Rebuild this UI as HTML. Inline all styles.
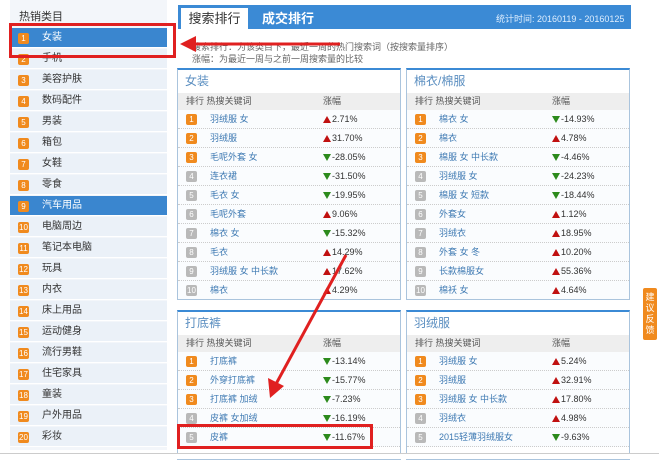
<!DOCTYPE html>
<html><head><meta charset="utf-8"><style>
*{margin:0;padding:0;box-sizing:border-box}
body{width:659px;height:459px;overflow:hidden;background:#fff;font-family:"Liberation Sans","Noto Sans CJK SC",sans-serif;font-size:10px;color:#333;position:relative}
.abs{position:absolute}
.side{left:10px;top:0;width:157px;height:450px;background:#f3f6fa}
.side .t{position:absolute;left:9px;top:8px;font-size:11px;color:#333}
.row{position:absolute;left:0;width:157px;height:20px;background:#ebf1f8;border-bottom:1px solid #fff;font-size:10px;line-height:20px;padding-left:32px;color:#333}
.row.on{background:#3a86cf;color:#fff}
.num{position:absolute;left:8px;top:5px;width:11px;height:11px;background:#f08a1e;color:#fff;font-size:8px;line-height:11px;text-align:center;border-radius:2px}
.num.g{background:#b9b9b9}
.bar{left:178px;top:5px;width:453px;height:24px;background:#3b8ad5}
.tab1{left:181px;top:8px;width:67px;height:22px;background:#fff;font-size:13px;line-height:22px;text-align:center;color:#333}
.tab2{left:262px;top:8px;font-size:13px;line-height:22px;color:#fff;font-weight:bold}
.stat{left:496px;top:12px;font-size:9px;color:#dfeefe;white-space:nowrap}
.desc{left:192px;font-size:9px;color:#666}
.panel{border:1px solid #aac4dd;border-top:2px solid #3b8ad5;background:#fff;overflow:hidden}
.panel .h{height:23px;font-size:12px;line-height:23px;padding-left:7px;color:#5a8ec0}
.panel .hd{height:17px;background:#eee;font-size:9px;line-height:17px;color:#555;position:relative}
.panel .r{height:19px;border-bottom:1px dotted #ccc;position:relative;font-size:9px;line-height:19px;background:#fafcfe}
.r .num{left:8px;top:4px}
.r .k{position:absolute;left:32px;color:#3f7ab3}
.r .v{position:absolute;left:145px;color:#333}
.up,.dn{display:inline-block;width:0;height:0;border-left:4px solid transparent;border-right:4px solid transparent;margin-right:1px;vertical-align:middle}
.up{border-bottom:7px solid #c01010}
.dn{border-top:7px solid #2c8a1c}
.sc{position:absolute;right:2px;width:3px;height:18px;background:#3b8ad5}
</style></head><body>
<div class="abs side"><div class="t">热销类目</div>
<div class="row on" style="top:28px"><span class="num">1</span>女装</div>
<div class="row" style="top:49px"><span class="num">2</span>手机</div>
<div class="row" style="top:70px"><span class="num">3</span>美容护肤</div>
<div class="row" style="top:91px"><span class="num">4</span>数码配件</div>
<div class="row" style="top:112px"><span class="num">5</span>男装</div>
<div class="row" style="top:133px"><span class="num">6</span>箱包</div>
<div class="row" style="top:154px"><span class="num">7</span>女鞋</div>
<div class="row" style="top:175px"><span class="num">8</span>零食</div>
<div class="row on" style="top:196px"><span class="num">9</span>汽车用品</div>
<div class="row" style="top:217px"><span class="num">10</span>电脑周边</div>
<div class="row" style="top:238px"><span class="num">11</span>笔记本电脑</div>
<div class="row" style="top:259px"><span class="num">12</span>玩具</div>
<div class="row" style="top:280px"><span class="num">13</span>内衣</div>
<div class="row" style="top:301px"><span class="num">14</span>床上用品</div>
<div class="row" style="top:322px"><span class="num">15</span>运动健身</div>
<div class="row" style="top:343px"><span class="num">16</span>流行男鞋</div>
<div class="row" style="top:364px"><span class="num">17</span>住宅家具</div>
<div class="row" style="top:385px"><span class="num">18</span>童装</div>
<div class="row" style="top:406px"><span class="num">19</span>户外用品</div>
<div class="row" style="top:427px"><span class="num">20</span>彩妆</div>
</div>
<div class="abs" style="left:9px;top:23px;width:167px;height:35px;border:3px solid #e02020"></div>

<div class="abs bar"></div>
<div class="abs tab1">搜索排行</div>
<div class="abs tab2">成交排行</div>
<div class="abs stat">统计时间: 20160119 - 20160125</div>
<div class="abs desc" style="top:40px">搜索排行：为该类目下，最近一周的热门搜索词（按搜索量排序）</div>
<div class="abs desc" style="top:52px">涨幅：为最近一周与之前一周搜索量的比较</div>

<div class="abs panel" style="left:177px;top:68px;width:224px;height:232px">
<div class="h">女装</div><div class="hd"><span style="position:absolute;left:8px">排行 热搜关键词</span><span style="position:absolute;left:145px">涨幅</span></div>
<div class="sc" style="top:44px"></div>
<div class="r"><span class="num">1</span><span class="k">羽绒服 女</span><span class="v"><b class="up"></b>2.71%</span></div>
<div class="r"><span class="num">2</span><span class="k">羽绒服</span><span class="v"><b class="up"></b>31.70%</span></div>
<div class="r"><span class="num">3</span><span class="k">毛呢外套 女</span><span class="v"><b class="dn"></b>-28.05%</span></div>
<div class="r"><span class="num g">4</span><span class="k">连衣裙</span><span class="v"><b class="dn"></b>-31.50%</span></div>
<div class="r"><span class="num g">5</span><span class="k">毛衣 女</span><span class="v"><b class="dn"></b>-19.95%</span></div>
<div class="r"><span class="num g">6</span><span class="k">毛呢外套</span><span class="v"><b class="up"></b>9.06%</span></div>
<div class="r"><span class="num g">7</span><span class="k">棉衣 女</span><span class="v"><b class="dn"></b>-15.32%</span></div>
<div class="r"><span class="num g">8</span><span class="k">毛衣</span><span class="v"><b class="up"></b>14.29%</span></div>
<div class="r"><span class="num g">9</span><span class="k">羽绒服 女 中长款</span><span class="v"><b class="up"></b>17.62%</span></div>
<div class="r"><span class="num g">10</span><span class="k">棉衣</span><span class="v"><b class="up"></b>4.29%</span></div>
</div>

<div class="abs panel" style="left:406px;top:68px;width:224px;height:232px">
<div class="h">棉衣/棉服</div><div class="hd"><span style="position:absolute;left:8px">排行 热搜关键词</span><span style="position:absolute;left:145px">涨幅</span></div>
<div class="sc" style="top:44px"></div>
<div class="r"><span class="num">1</span><span class="k">棉衣 女</span><span class="v"><b class="dn"></b>-14.93%</span></div>
<div class="r"><span class="num">2</span><span class="k">棉衣</span><span class="v"><b class="up"></b>4.78%</span></div>
<div class="r"><span class="num">3</span><span class="k">棉服 女 中长款</span><span class="v"><b class="dn"></b>-4.46%</span></div>
<div class="r"><span class="num g">4</span><span class="k">羽绒服 女</span><span class="v"><b class="dn"></b>-24.23%</span></div>
<div class="r"><span class="num g">5</span><span class="k">棉服 女 短款</span><span class="v"><b class="dn"></b>-18.44%</span></div>
<div class="r"><span class="num g">6</span><span class="k">外套女</span><span class="v"><b class="up"></b>1.12%</span></div>
<div class="r"><span class="num g">7</span><span class="k">羽绒衣</span><span class="v"><b class="up"></b>18.95%</span></div>
<div class="r"><span class="num g">8</span><span class="k">外套 女 冬</span><span class="v"><b class="up"></b>10.20%</span></div>
<div class="r"><span class="num g">9</span><span class="k">长款棉服女</span><span class="v"><b class="up"></b>55.36%</span></div>
<div class="r"><span class="num g">10</span><span class="k">棉袄 女</span><span class="v"><b class="up"></b>4.64%</span></div>
</div>

<div class="abs panel" style="left:177px;top:310px;width:224px;height:150px">
<div class="h">打底裤</div><div class="hd"><span style="position:absolute;left:8px">排行 热搜关键词</span><span style="position:absolute;left:145px">涨幅</span></div>
<div class="sc" style="top:44px"></div>
<div class="r"><span class="num">1</span><span class="k">打底裤</span><span class="v"><b class="dn"></b>-13.14%</span></div>
<div class="r"><span class="num">2</span><span class="k">外穿打底裤</span><span class="v"><b class="dn"></b>-15.77%</span></div>
<div class="r"><span class="num">3</span><span class="k">打底裤 加绒</span><span class="v"><b class="dn"></b>-7.23%</span></div>
<div class="r"><span class="num g">4</span><span class="k">皮裤 女加绒</span><span class="v"><b class="dn"></b>-16.19%</span></div>
<div class="r"><span class="num g">5</span><span class="k">皮裤</span><span class="v"><b class="dn"></b>-11.67%</span></div>
</div>

<div class="abs panel" style="left:406px;top:310px;width:224px;height:150px">
<div class="h">羽绒服</div><div class="hd"><span style="position:absolute;left:8px">排行 热搜关键词</span><span style="position:absolute;left:145px">涨幅</span></div>
<div class="sc" style="top:44px"></div>
<div class="r"><span class="num">1</span><span class="k">羽绒服 女</span><span class="v"><b class="up"></b>5.24%</span></div>
<div class="r"><span class="num">2</span><span class="k">羽绒服</span><span class="v"><b class="up"></b>32.91%</span></div>
<div class="r"><span class="num">3</span><span class="k">羽绒服 女 中长款</span><span class="v"><b class="up"></b>17.80%</span></div>
<div class="r"><span class="num g">4</span><span class="k">羽绒衣</span><span class="v"><b class="up"></b>4.98%</span></div>
<div class="r"><span class="num g">5</span><span class="k">2015轻薄羽绒服女</span><span class="v"><b class="dn"></b>-9.63%</span></div>
</div>

<div class="abs" style="left:0;top:453px;width:659px;height:6px;background:#fff;border-top:1px solid #ccc"></div>
<div class="abs" style="left:0;top:454px;width:659px;height:5px;background:#fff"></div>
<div class="abs" style="left:177px;top:424px;width:196px;height:25px;border:3px solid #e02020"></div>
<div class="abs" style="left:643px;top:288px;width:14px;height:52px;background:#f08a1e;border-radius:2px;color:#fff;font-size:9px;line-height:11px;text-align:center;padding-top:4px">建议反馈</div>

<svg class="abs" style="left:0;top:0" width="659" height="459">
<line x1="340" y1="44" x2="192" y2="44" stroke="#e02020" stroke-width="3"/>
<polygon points="180,44 196,36 196,52" fill="#e02020"/>
<line x1="346" y1="255" x2="276" y2="384" stroke="#e02020" stroke-width="3"/>
<polygon points="270,398 268,378 284,386" fill="#e02020"/>
</svg>
</body></html>
